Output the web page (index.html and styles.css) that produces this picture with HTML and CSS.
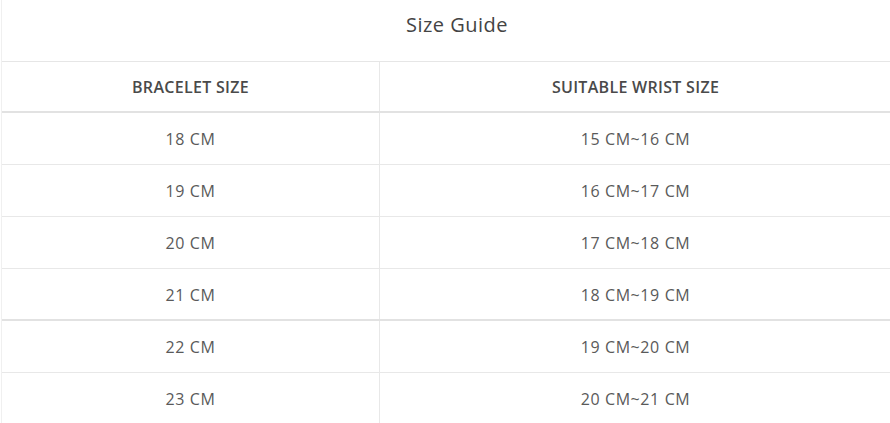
FILE: index.html
```html
<!DOCTYPE html>
<html lang="en">
<head>
<meta charset="utf-8">
<title>Size Guide</title>
<link rel="stylesheet" href="styles.css">
</head>
<body>
<div class="guide">
  <h2 class="guide-title">Size Guide</h2>
  <table class="size-table">
    <thead>
      <tr><th>BRACELET SIZE</th><th>SUITABLE WRIST SIZE</th></tr>
    </thead>
    <tbody>
      <tr><td>18 CM</td><td>15 CM~16 CM</td></tr>
      <tr><td>19 CM</td><td>16 CM~17 CM</td></tr>
      <tr><td>20 CM</td><td>17 CM~18 CM</td></tr>
      <tr class="thick"><td>21 CM</td><td>18 CM~19 CM</td></tr>
      <tr><td>22 CM</td><td>19 CM~20 CM</td></tr>
      <tr><td>23 CM</td><td>20 CM~21 CM</td></tr>
    </tbody>
  </table>
</div>
</body>
</html>
```

FILE: styles.css
```css
html, body {
  margin: 0;
  padding: 0;
  background: #fff;
}
body {
  font-family: "Open Sans", "Noto Sans", sans-serif;
  color: #555;
}
.guide {
  margin-left: 1px;
  border-left: 1px solid #f0f0f0;
}
.guide-title {
  margin: 0;
  height: 62px;
  box-sizing: border-box;
  display: flex;
  align-items: flex-start;
  justify-content: center;
  padding: 10px 0 0 22px;
  font-size: 20px;
  line-height: 30px;
  font-weight: 500;
  letter-spacing: 0.5px;
  color: #444;
  border-bottom: 1px solid #e6e6e6;
}
.size-table {
  width: 889px;
  border-collapse: collapse;
  table-layout: fixed;
}
.size-table th,
.size-table td {
  text-align: center;
  padding: 0;
}
.size-table th:first-child,
.size-table td:first-child {
  width: 377px;
  border-right: 1px solid #e8e8e8;
}
.size-table th {
  height: 49px;
  font-size: 16px;
  font-weight: 600;
  letter-spacing: 0.3px;
  color: #4a4a4a;
  border-bottom: 2px solid #e2e2e2;
}
.size-table td {
  height: 50px;
  padding-top: 1px;
  font-size: 16px;
  font-weight: 400;
  letter-spacing: 0.6px;
  color: #5a5a5a;
  border-bottom: 1px solid #e8e8e8;
}
.size-table tr.thick td {
  height: 49px;
  border-bottom: 2px solid #e2e2e2;
}
```
